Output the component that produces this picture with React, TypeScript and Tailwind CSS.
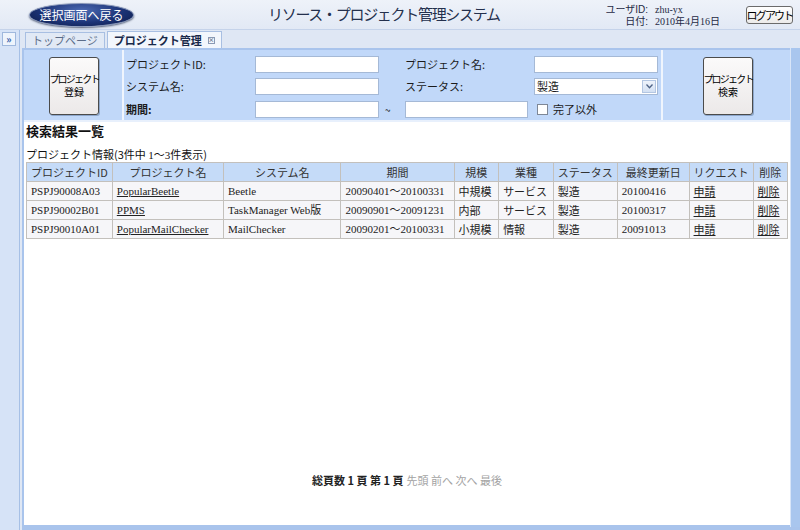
import React from 'react';

const gothic = { fontFamily: '"Noto Sans CJK JP", "DejaVu Sans", sans-serif' };
const compact = { fontFamily: '"Liberation Sans", "Noto Sans CJK JP", sans-serif' };
const serif = { fontFamily: '"Liberation Serif", "Noto Sans CJK JP", serif' };

type Row = {
  id: string;
  name: string;
  system: string;
  period: string;
  scale: string;
  industry: string;
  status: string;
  updated: string;
};

const rows: Row[] = [
  { id: 'PSPJ90008A03', name: 'PopularBeetle', system: 'Beetle', period: '20090401～20100331', scale: '中規模', industry: 'サービス', status: '製造', updated: '20100416' },
  { id: 'PSPJ90002B01', name: 'PPMS', system: 'TaskManager Web版', period: '20090901～20091231', scale: '内部', industry: 'サービス', status: '製造', updated: '20100317' },
  { id: 'PSPJ90010A01', name: 'PopularMailChecker', system: 'MailChecker', period: '20090201～20100331', scale: '小規模', industry: '情報', status: '製造', updated: '20091013' },
];

const cols = [
  { label: 'プロジェクトID', w: 'w-[83px]' },
  { label: 'プロジェクト名', w: 'w-[113px]' },
  { label: 'システム名', w: 'w-[120px]' },
  { label: '期間', w: 'w-[114px]' },
  { label: '規模', w: 'w-[45px]' },
  { label: '業種', w: 'w-[55px]' },
  { label: 'ステータス', w: 'w-[63px]' },
  { label: '最終更新日', w: 'w-[73px]' },
  { label: 'リクエスト', w: 'w-[58px]' },
  { label: '削除', w: 'w-[35px]' },
];

function TextBox({ w }: { w: string }) {
  return <div className={`${w} h-[17px] bg-white border border-[#a5b9d6]`} />;
}

function BigButton({ top, bottom }: { top: string; bottom: string }) {
  return (
    <div
      className="w-[50px] h-[58px] flex flex-col items-center justify-center rounded-[3px] border border-[#4b4b4b] bg-gradient-to-b from-[#fbfafa] to-[#ece9e9] text-[10px] leading-[13px] text-black shadow-[1px_1px_0_#8da7cc]"
      style={compact}
    >
      <span className="whitespace-nowrap tracking-[-1.8px]">{top}</span>
      <span>{bottom}</span>
    </div>
  );
}

export default function App() {
  const cell = 'border border-[#c3c0bc] px-[4px] h-[19px] leading-[17px] whitespace-nowrap';
  return (
    <div className="w-[800px] h-[530px] overflow-hidden bg-[#dfe7f4] text-[#222]" style={gothic}>
      {/* header */}
      <div className="h-[30px] flex items-center bg-gradient-to-b from-[#eef2f9] to-[#e2e9f5] border-b border-[#c5d3ea]">
        <div className="ml-[29px] w-[105px] h-[24px] rounded-[50%] bg-[radial-gradient(ellipse_at_50%_30%,#4d6bb3_0%,#1c3478_55%,#0b1740_100%)] border border-[#8796b8] shadow-[0_1px_2px_#55607a] flex items-center justify-center text-white text-[12px]">
          選択画面へ戻る
        </div>
        <div className="ml-[134px] text-[15px] tracking-[-1.3px] text-[#24304d] whitespace-nowrap">
          リソース・プロジェクト管理システム
        </div>
        <div className="flex-1" />
        <div className="text-[10px] leading-[12px] text-[#1f2a44] mt-[2px] whitespace-nowrap" style={compact}>
          <div className="flex h-[12px]">
            <span className="w-[50px] text-right">ユーザID:</span>
            <span className="ml-[7px]" style={serif}>zhu-yx</span>
          </div>
          <div className="flex h-[12px]">
            <span className="w-[50px] text-right">日付:</span>
            <span className="ml-[7px]" style={serif}>2010年4月16日</span>
          </div>
        </div>
        <div className="ml-[26px] mr-[7px] mt-[1px] w-[47px] h-[18px] flex items-center justify-center rounded-[3px] border border-[#6b6b6b] bg-gradient-to-b from-white to-[#ecebea] text-[11px] tracking-[-1.8px] text-black whitespace-nowrap">
          ログアウト
        </div>
      </div>

      <div className="flex h-[500px]">
        {/* collapsed left sidebar */}
        <div className="w-[20px] h-full bg-[#d6e3f7] border-r border-[#a6c0e6] pt-[2px] pl-[2px]">
          <div className="w-[14px] h-[14px] bg-[#eef4fc] border border-[#9fb8dd] flex items-center justify-center text-[10px] leading-none text-[#2f5aa8] font-bold">
            »
          </div>
        </div>

        <div className="flex-1 flex flex-col pl-[2px]">
          {/* tabs */}
          <div className="h-[18px] flex items-end pl-[3px] gap-[2px]">
            <div className="h-[16px] px-[6px] flex items-center bg-[#e1e9f5] border border-b-0 border-[#a8bfe2] text-[11px] text-[#5b6c88]">
              トップページ
            </div>
            <div className="h-[17px] px-[6px] flex items-center bg-[#f2f6fc] border border-b-0 border-[#a8bfe2] text-[11px] font-bold text-[#18294a]">
              プロジェクト管理
              <span className="ml-[6px] w-[7px] h-[7px] border border-[#8a99b3] flex items-center justify-center text-[6px] leading-none text-[#6a7891]">×</span>
            </div>
          </div>

          {/* panel */}
          <div className="flex-1 flex">
            <div className="flex-1 flex flex-col border-2 border-[#a9c4ec] border-r-0">
              {/* search form */}
              <div className="h-[72px] flex bg-[#c1d8f9] border-b-2 border-[#e8f0fc]">
                <div className="w-[100px] border-r-2 border-[#f0f5fd] pl-[25px] pt-[7px]">
                  <BigButton top="プロジェクト" bottom="登録" />
                </div>
                <div className="w-[539px] border-r-2 border-[#f0f5fd] pt-[3px] pl-[2px] text-[11px] text-[#1b1b1b]">
                  <div className="flex items-center h-[22px]">
                    <span className="w-[129px]">プロジェクトID:</span>
                    <TextBox w="w-[124px]" />
                    <span className="w-[26px]" />
                    <span className="w-[129px]">プロジェクト名:</span>
                    <TextBox w="w-[124px]" />
                  </div>
                  <div className="flex items-center h-[23px]">
                    <span className="w-[129px]">システム名:</span>
                    <TextBox w="w-[124px]" />
                    <span className="w-[26px]" />
                    <span className="w-[129px]">ステータス:</span>
                    <div className="w-[124px] h-[17px] bg-white border border-[#a5b9d6] flex items-center">
                      <span className="flex-1 pl-[2px]">製造</span>
                      <span className="w-[14px] h-[13px] mr-[1px] bg-gradient-to-b from-[#eef3fb] to-[#d3e0f3] border border-[#b3c6e2] flex items-center justify-center">
                        <svg width="7" height="5" viewBox="0 0 7 5">
                          <path d="M0.5 0.5 L3.5 3.8 L6.5 0.5" fill="none" stroke="#4d6285" strokeWidth="1.3" />
                        </svg>
                      </span>
                    </div>
                  </div>
                  <div className="flex items-center h-[22px]">
                    <span className="w-[129px] font-bold">期間:</span>
                    <TextBox w="w-[124px]" />
                    <span className="w-[26px] pl-[6px] text-[10px]">~</span>
                    <TextBox w="w-[123px]" />
                    <span className="ml-[9px] w-[11px] h-[11px] bg-white border border-[#7e8796]" />
                    <span className="ml-[5px]">完了以外</span>
                  </div>
                </div>
                <div className="flex-1 pl-[40px] pt-[7px]">
                  <BigButton top="プロジェクト" bottom="検索" />
                </div>
              </div>

              {/* results */}
              <div className="flex-1 flex flex-col bg-white px-[2px]">
                <div className="mt-[1px] text-[13px] leading-[15px] font-bold text-[#111]">検索結果一覧</div>
                <div className="mt-[10px] text-[11px] leading-[13px] text-[#111] whitespace-nowrap">
                  プロジェクト情報(3件中 <span style={serif}>1～3</span>件表示)
                </div>
                <table className="border-collapse text-[11px] text-[#222]">
                  <thead>
                    <tr className="bg-[#c5dbf8]">
                      {cols.map((c) => (
                        <th key={c.label} className={`${cell} ${c.w} font-normal text-center text-[#333]`}>
                          {c.label}
                        </th>
                      ))}
                    </tr>
                  </thead>
                  <tbody>
                    {rows.map((r) => (
                      <tr key={r.id} className="bg-[#f6f6f9]">
                        <td className={cell} style={serif}>{r.id}</td>
                        <td className={cell} style={serif}><span className="underline">{r.name}</span></td>
                        <td className={cell} style={serif}>{r.system}</td>
                        <td className={cell} style={serif}>{r.period}</td>
                        <td className={cell}>{r.scale}</td>
                        <td className={cell}>{r.industry}</td>
                        <td className={cell}>{r.status}</td>
                        <td className={cell} style={serif}>{r.updated}</td>
                        <td className={cell}><span className="underline">申請</span></td>
                        <td className={cell}><span className="underline">削除</span></td>
                      </tr>
                    ))}
                  </tbody>
                </table>
                <div className="flex-1" />
                <div className="mb-[38px] text-center text-[11px] leading-[13px]">
                  <span className="font-bold text-[#222]">総頁数 1 頁 第 1 頁</span>
                  <span className="ml-[3px] text-[#a3a3a3]">先頭 前へ 次へ 最後</span>
                </div>
              </div>
            </div>
            <div className="w-[10px] bg-[#a9c6ee] border-l border-[#d8e5f8]" />
          </div>
          <div className="h-[3px] bg-[#a9c4ec]" />
        </div>
      </div>
    </div>
  );
}
